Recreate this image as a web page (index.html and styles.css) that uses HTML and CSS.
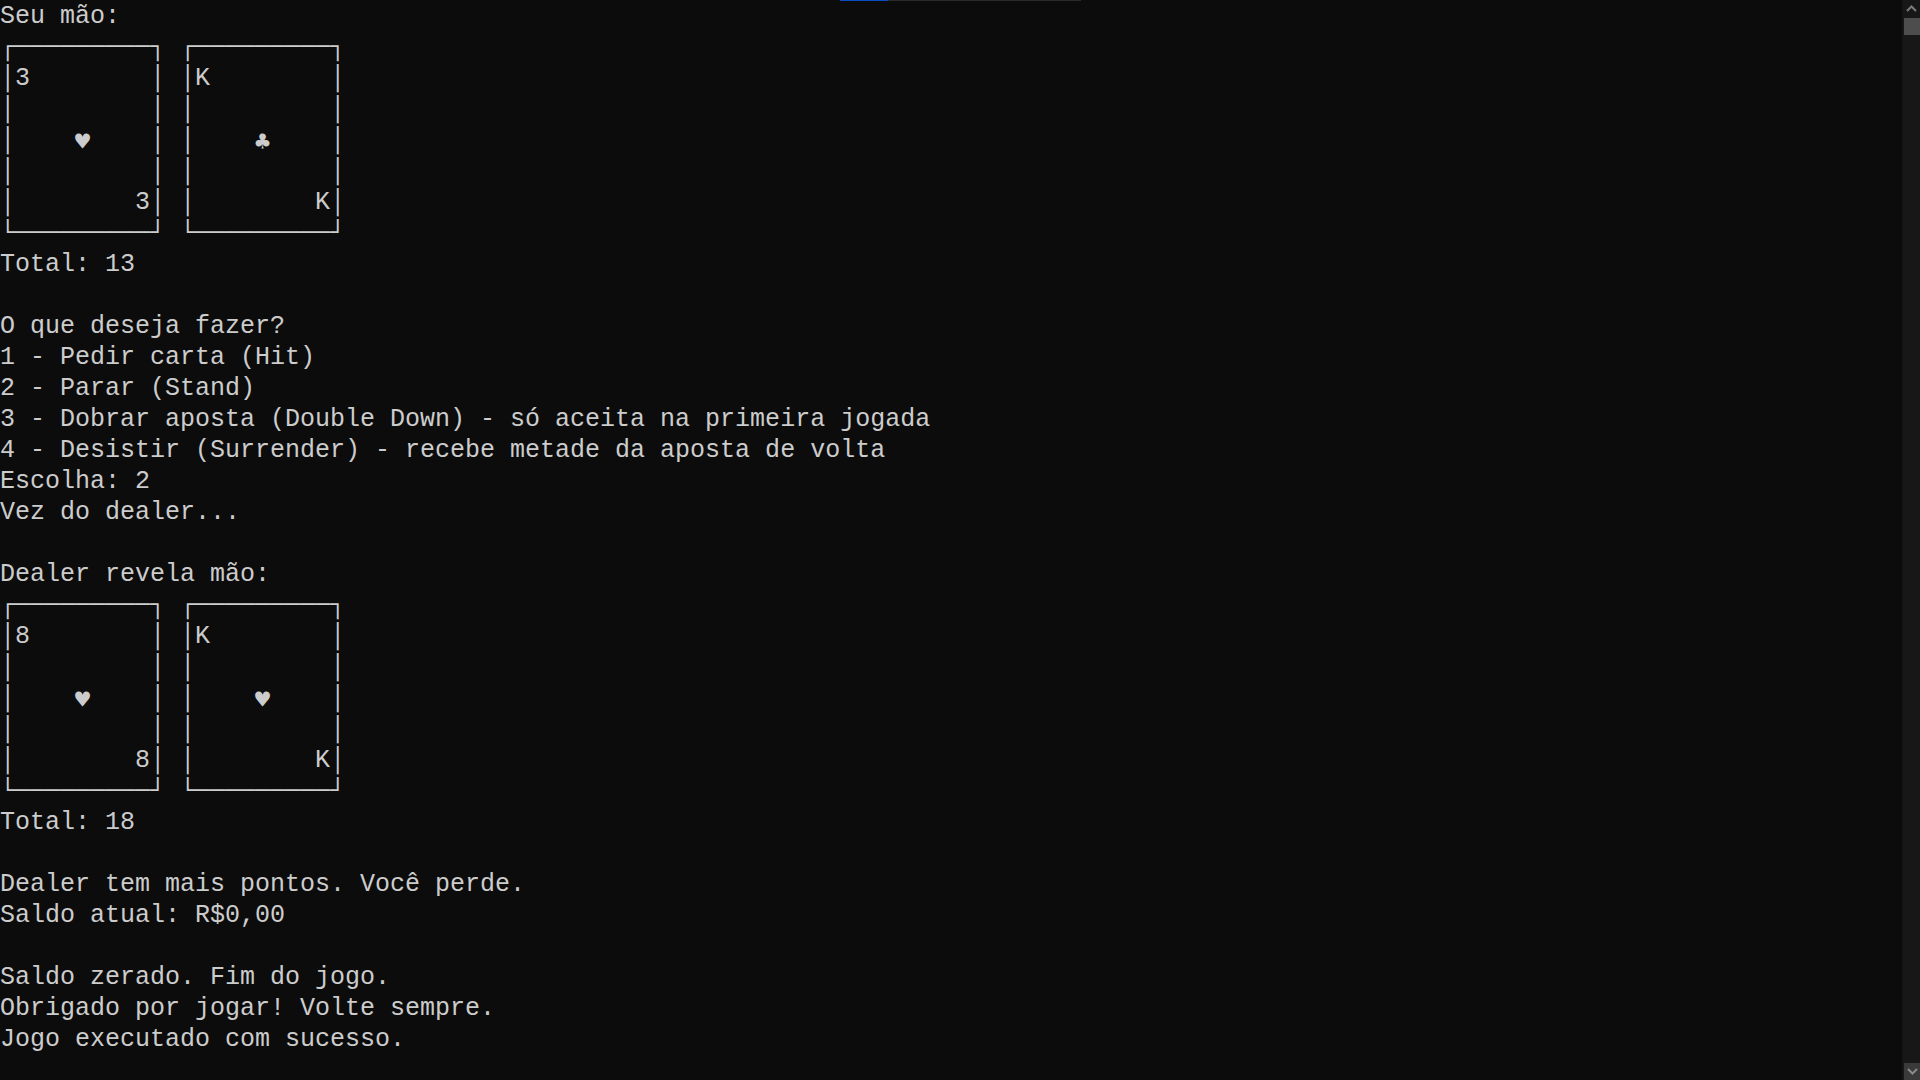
FILE: index.html
```html
<!DOCTYPE html>
<html lang="pt-BR">
<head>
<meta charset="utf-8">
<title>Blackjack</title>
<link rel="stylesheet" href="styles.css">
</head>
<body>
<div class="window">
  <div class="progress"><span class="progress-fill"></span><span class="progress-rest"></span></div>
  <main class="console"><pre class="output">Seu mão:
┌─────────┐ ┌─────────┐
│3        │ │K        │
│         │ │         │
│    <span class="suit">♥</span>    │ │    <span class="suit">♣</span>    │
│         │ │         │
│        3│ │        K│
└─────────┘ └─────────┘
Total: 13

O que deseja fazer?
1 - Pedir carta (Hit)
2 - Parar (Stand)
3 - Dobrar aposta (Double Down) - só aceita na primeira jogada
4 - Desistir (Surrender) - recebe metade da aposta de volta
Escolha: 2
Vez do dealer...

Dealer revela mão:
┌─────────┐ ┌─────────┐
│8        │ │K        │
│         │ │         │
│    <span class="suit">♥</span>    │ │    <span class="suit">♥</span>    │
│         │ │         │
│        8│ │        K│
└─────────┘ └─────────┘
Total: 18

Dealer tem mais pontos. Você perde.
Saldo atual: R$0,00

Saldo zerado. Fim do jogo.
Obrigado por jogar! Volte sempre.
Jogo executado com sucesso.</pre></main>
  <aside class="scrollbar">
    <div class="sb-btn sb-up"><svg width="11" height="7" viewBox="0 0 11 7"><path d="M1 6 L5.5 1.5 L10 6" fill="none" stroke="#7a7a7a" stroke-width="2"/></svg></div>
    <div class="sb-track"><div class="sb-thumb"></div></div>
    <div class="sb-btn sb-down"><svg width="11" height="7" viewBox="0 0 11 7"><path d="M1 1 L5.5 5.5 L10 1" fill="none" stroke="#8a8a8a" stroke-width="2"/></svg></div>
  </aside>
</div>
</body>
</html>
```
FILE: styles.css
```css
html, body {
  margin: 0;
  padding: 0;
  background: #0c0c0c;
}
.window {
  position: relative;
  display: flex;
  width: 1920px;
  height: 1080px;
  overflow: hidden;
  background: #0c0c0c;
}
.progress {
  position: absolute;
  top: 0;
  left: 840px;
  display: flex;
  height: 1px;
}
.progress-fill {
  width: 48px;
  background: #0a4dc2;
}
.progress-rest {
  width: 193px;
  background: #2b2b2b;
}
.console {
  flex: 1;
  overflow: hidden;
}
.output {
  margin: 0;
  padding: 1px 0 0 0;
  font-family: "Liberation Mono", "DejaVu Sans Mono", monospace;
  font-size: 25px;
  line-height: 31px;
  color: #cccccc;
  white-space: pre;
}
.suit {
  display: inline-block;
  width: 15px;
  overflow: visible;
  text-align: center;
  vertical-align: top;
  font-family: "DejaVu Sans Mono", monospace;
  font-size: 25px;
  line-height: 33px;
  height: 31px;
}
.scrollbar {
  width: 17px;
  display: flex;
  flex-direction: column;
  background: #171717;
  border-left: 1px solid #141414;
}
.sb-btn {
  height: 17px;
  display: flex;
  align-items: center;
  justify-content: center;
}
.sb-down {
  background: #3a3a3a;
  margin-left: 1px;
}
.sb-track {
  flex: 1;
  padding: 1px 0 0 1px;
}
.sb-thumb {
  height: 17px;
  background: #4d4d4d;
}
```
